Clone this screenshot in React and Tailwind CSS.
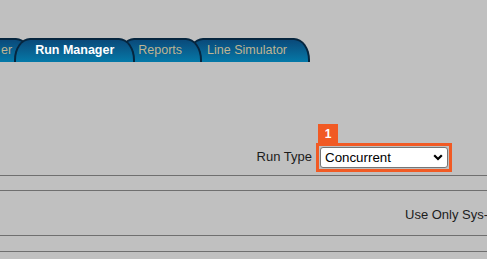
import React from 'react';

// Tab strip: the first tab is cut off by the left edge of the window
const TABS = [
        { label: 'er', active: false, offset: 'ml-[-19px] px-[18px]', z: 'z-10' },
        { label: 'Run Manager', active: true, offset: 'ml-[-18px] px-[19px]', z: 'z-30' },
        { label: 'Reports', active: false, offset: 'ml-[-17px] px-[18px]', z: 'z-20' },
        { label: 'Line Simulator', active: false, offset: 'ml-[-15px] pl-[18px] pr-[21px]', z: 'z-10' },
];

const Tab = ({ tab }) => (
        <div
                className={`relative ${tab.z} ${tab.offset} h-[24px] pb-[2px] flex items-center whitespace-nowrap border-2 border-b-0 border-[#06263f] rounded-tl-[16px_22px] rounded-tr-[16px_22px] bg-gradient-to-b from-[#0a4a7a] to-[#0479a8] text-[12.5px] ${tab.active ? 'font-bold text-white' : 'text-[#bfb492]'}`}
        >
                {tab.label}
        </div>
);

const App = () => {
        return (
                <div className="w-[487px] h-[259px] overflow-hidden bg-[#c0c0c0] font-['Liberation_Sans',Arial,sans-serif] text-[#1c1c1c]">
                        {/* Tabs */}
                        <div className="pt-[38px] flex">
                                {TABS.map((tab) => (
                                        <Tab key={tab.label} tab={tab} />
                                ))}
                        </div>

                        {/* Run Type */}
                        <div className="flex justify-end pr-[35px] pt-[62px]">
                                <div className="flex items-end gap-[4px]">
                                        <div className="h-[30px] flex items-center text-[13px] pb-[1px]">Run Type</div>
                                        <div className="flex flex-col items-start">
                                                <div className="ml-[2px] w-[20px] h-[19px] bg-[#f15a24] text-white font-bold text-[12px] flex items-center justify-center">1</div>
                                                <div className="border-[3px] border-[#f15a24] p-[1px]">
                                                        <div className="relative">
                                                                <select
                                                                        defaultValue="Concurrent"
                                                                        className="appearance-none block w-[128px] h-[21px] pl-[4px] bg-white border border-[#767676] rounded-[3px] text-[13.333px] text-black outline-none font-['Liberation_Sans',Arial,sans-serif]"
                                                                >
                                                                        <option>Concurrent</option>
                                                                        <option>Sequential</option>
                                                                </select>
                                                                <svg className="absolute right-[5px] top-[7px] pointer-events-none" width="10" height="7" viewBox="0 0 10 7">
                                                                        <polyline points="1.2,1.2 5,5 8.8,1.2" fill="none" stroke="#000" strokeWidth="2.2" />
                                                                </svg>
                                                        </div>
                                                </div>
                                        </div>
                                </div>
                        </div>

                        {/* Rows */}
                        <div className="mt-[3px] border-t border-[#6f6f6f] h-[15px]" />
                        <div className="border-t border-[#6f6f6f] h-[45px] flex items-center pt-[3px] pl-[405px] whitespace-nowrap text-[13px]">
                                Use Only Sys-Gen
                        </div>
                        <div className="border-t border-[#6f6f6f] h-[16px]" />
                        <div className="border-t border-[#6f6f6f] h-[8px]" />
                </div>
        );
};

export default App;
